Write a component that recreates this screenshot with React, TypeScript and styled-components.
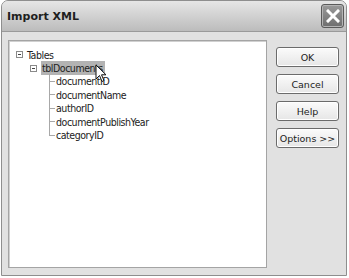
import React from "react";
import styled, { createGlobalStyle } from "styled-components";

const Global = createGlobalStyle`
  html, body { margin: 0; padding: 0; background: #ffffff; }
  body { font-family: "DejaVu Sans", sans-serif; }
`;

const Window = styled.div`
  margin: 0 0 0 1px;
  width: 344px;
  height: 274px;
  border: 1px solid #8e8e8e;
  border-radius: 7px 7px 0 0;
  overflow: hidden;
  background: #e1e1e1;
  display: flex;
  flex-direction: column;
`;

const TitleBar = styled.div`
  height: 30px;
  flex: none;
  display: flex;
  align-items: center;
  justify-content: space-between;
  padding: 0 2px 0 5px;
  background: linear-gradient(#e6e6e6 0%, #d3d3d3 45%, #bcbcbc 100%);
  border-bottom: 1px solid #9a9a9a;
`;

const Title = styled.span`
  font-family: "DejaVu Sans", sans-serif;
  font-weight: bold;
  font-size: 11px;
  color: #1e1e1e;
`;

const CloseButton = styled.div`
  width: 21px;
  height: 22px;
  border: 1px solid #5a5a5a;
  border-radius: 3px;
  background: linear-gradient(#9a9a9a, #6e6e6e);
  box-shadow: inset 0 0 0 1px #b4b4b4;
  display: flex;
  align-items: center;
  justify-content: center;
`;

const Body = styled.div`
  flex: 1;
  display: flex;
  padding: 8px 6px 6px 6px;
  gap: 9px;
`;

const TreePanel = styled.div`
  position: relative;
  width: 259px;
  height: 228px;
  background: #ffffff;
  border: 1px solid #a4a4a4;
  box-shadow: inset 1px 1px 0 #d0d0d0;
  padding: 7px 0 0 7px;
  box-sizing: border-box;
  font-family: "DejaVu Sans Condensed", "DejaVu Sans", sans-serif;
  font-stretch: condensed;
  font-size: 10.5px;
  color: #222;
`;

const Row = styled.div<{ $indent: number }>`
  height: 13.4px;
  display: flex;
  align-items: center;
  padding-left: ${(p) => p.$indent}px;
  white-space: nowrap;
  letter-spacing: -0.45px;
`;

const Toggle = styled.span`
  width: 5px;
  height: 5px;
  border: 1px solid #8a8a8a;
  position: relative;
  margin-right: 4px;
  flex: none;
  &::after {
    content: "";
    position: absolute;
    left: 1px;
    top: 2px;
    width: 3px;
    height: 1px;
    background: #444;
  }
`;

const Label = styled.span<{ $selected?: boolean }>`
  padding: 1px 2px 1px 1px;
  background: ${(p) => (p.$selected ? "#b3b3b3" : "transparent")};
`;

const Connector = styled.span`
  width: 6px;
  height: 1px;
  margin-right: 1px;
  background: #a8a8a8;
  flex: none;
`;

const VLine = styled.div`
  position: absolute;
  left: 40px;
  top: 33px;
  width: 1px;
  height: 61px;
  background: #a8a8a8;
`;

const ButtonColumn = styled.div`
  display: flex;
  flex-direction: column;
  gap: 7px;
  padding-top: 7px;
`;

const Button = styled.div`
  width: 61px;
  height: 18px;
  border: 1px solid #6b6b6b;
  border-radius: 3px;
  background: linear-gradient(#fbfbfb, #e6e6e6);
  box-shadow: inset 0 0 0 1px #ffffff;
  display: flex;
  align-items: center;
  justify-content: center;
  font-family: "DejaVu Sans", sans-serif;
  font-size: 9.5px;
  color: #222;
`;

const Cursor = styled.svg`
  position: absolute;
  left: 86px;
  top: 23px;
`;

const fields = ["documentID", "documentName", "authorID", "documentPublishYear", "categoryID"];

export default function App() {
  return (
    <>
      <Global />
      <Window>
        <TitleBar>
          <Title>Import XML</Title>
          <CloseButton>
            <svg width="14" height="14" viewBox="0 0 14 14">
              <path d="M2 2 L12 12 M12 2 L2 12" stroke="#ffffff" strokeWidth="3" strokeLinecap="square" />
            </svg>
          </CloseButton>
        </TitleBar>
        <Body>
          <TreePanel>
            <Row $indent={0}>
              <Toggle />
              <span>Tables</span>
            </Row>
            <Row $indent={14}>
              <Toggle />
              <Label $selected>tblDocuments</Label>
            </Row>
            {fields.map((f) => (
              <Row key={f} $indent={33}>
                <Connector />
                <span>{f}</span>
              </Row>
            ))}
            <VLine />
            <Cursor width="12" height="19" viewBox="0 0 12 19">
              <path d="M1 1 L1 15 L4.5 11.5 L7 17.5 L9 16.5 L6.5 10.8 L11 10.8 Z" fill="#ffffff" stroke="#111" strokeWidth="1" strokeLinejoin="round" />
            </Cursor>
          </TreePanel>
          <ButtonColumn>
            <Button>OK</Button>
            <Button>Cancel</Button>
            <Button>Help</Button>
            <Button>Options &gt;&gt;</Button>
          </ButtonColumn>
        </Body>
      </Window>
    </>
  );
}
